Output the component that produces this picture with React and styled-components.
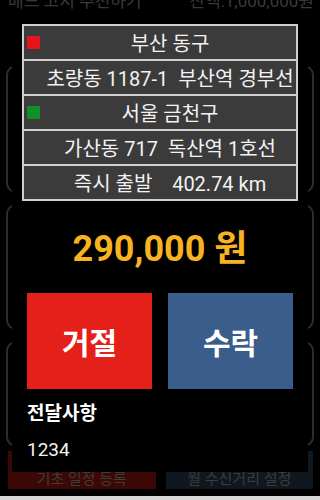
import React from "react";
import styled, { createGlobalStyle } from "styled-components";

const GlobalStyle = createGlobalStyle`
    html, body {
        margin: 0;
        padding: 0;
        background-color: #000;
    }
    body {
        font-family: Roboto, "Noto Sans CJK KR", sans-serif;
    }
`;

const Screen = styled.div`
    position: relative;
    width: 320px;
    height: 500px;
    overflow: hidden;
    background-color: #000;
`;

const Backdrop = styled.div`
    display: flex;
    flex-direction: column;
    height: 100%;
    color: #3a3a3a;
`;

const TopBar = styled.div`
    display: flex;
    justify-content: space-between;
    margin-top: -10px;
    padding: 0 6px 0 8px;
    height: 22px;
    font-size: 17px;
    line-height: 22px;
    white-space: nowrap;
`;

const Panels = styled.div`
    display: flex;
    flex-direction: column;
    gap: 11px;
    margin: 53px 6px 0;
`;

const Panel = styled.div`
    height: ${(p) => p.h}px;
    border: 2px solid #2e2e2e;
    border-radius: 10px;
    box-sizing: border-box;
`;

const BottomRow = styled.div`
    display: flex;
    gap: 10px;
    margin: 4px 7px 0 8px;
    height: 38px;
`;

const DimButton = styled.div`
    flex: 1;
    display: flex;
    align-items: center;
    justify-content: center;
    padding-top: 14px;
    box-sizing: border-box;
    background-color: ${(p) => p.bg};
    color: #3c3c3c;
    font-size: 15px;
`;

const NavStrip = styled.div`
    margin-top: auto;
    height: 4px;
    background-color: #d8d8d8;
`;

const Dialog = styled.div`
    position: absolute;
    left: 12px;
    top: 14px;
    width: 296px;
    height: 458px;
    box-sizing: border-box;
    padding: 10px 10px 0;
    background-color: #000;
    display: flex;
    flex-direction: column;
`;

const InfoTable = styled.div`
    display: flex;
    flex-direction: column;
    border-top: 2px solid #cfcfcf;
`;

const InfoRow = styled.div`
    position: relative;
    height: 33px;
    display: flex;
    align-items: center;
    justify-content: center;
    padding-left: 20px;
    background-color: #3b3b3b;
    border: 2px solid #cfcfcf;
    border-top: none;
    color: #f2f2f2;
    font-size: 20px;
    white-space: pre;
`;

const Marker = styled.span`
    position: absolute;
    left: 3px;
    top: 50%;
    width: 13px;
    height: 13px;
    margin-top: -7px;
    background-color: ${(p) => p.color};
`;

const Price = styled.div`
    margin-top: 26px;
    text-align: center;
    color: #f7b321;
    font-size: 36px;
    font-weight: 700;
    line-height: 44px;
`;

const Actions = styled.div`
    display: flex;
    gap: 16px;
    margin: 22px 5px 0;
`;

const ActionButton = styled.button`
    flex: 1;
    height: 96px;
    border: none;
    background-color: ${(p) => p.bg};
    color: #fff;
    font-family: inherit;
    font-size: 30px;
    font-weight: 700;
`;

const NoteTitle = styled.div`
    margin: 13px 5px 0;
    color: #fff;
    font-size: 19px;
    font-weight: 700;
    line-height: 24px;
`;

const NoteBody = styled.div`
    margin: 12px 5px 0;
    color: #f2f2f2;
    font-size: 19px;
    line-height: 24px;
`;

const App = () => {
    return (
        <Screen>
            <GlobalStyle />
            <Backdrop>
                <TopBar>
                    <span>배드  고지  추천하기</span>
                    <span>잔액:1,000,000원</span>
                </TopBar>
                <Panels>
                    <Panel h={128} />
                    <Panel h={126} />
                    <Panel h={106} />
                </Panels>
                <BottomRow>
                    <DimButton bg="#3c0805">기초 일정 등록</DimButton>
                    <DimButton bg="#0f1820">월 수신거리 설정</DimButton>
                </BottomRow>
                <NavStrip />
            </Backdrop>
            <Dialog>
                <InfoTable>
                    <InfoRow>
                        <Marker color="#e8141b" />
                        부산 동구
                    </InfoRow>
                    <InfoRow>초량동 1187-1  부산역 경부선</InfoRow>
                    <InfoRow>
                        <Marker color="#11902a" />
                        서울 금천구
                    </InfoRow>
                    <InfoRow>가산동 717  독산역 1호선</InfoRow>
                    <InfoRow>즉시 출발    402.74 km</InfoRow>
                </InfoTable>
                <Price>290,000 원</Price>
                <Actions>
                    <ActionButton bg="#e51f1a">거절</ActionButton>
                    <ActionButton bg="#3a5d8c">수락</ActionButton>
                </Actions>
                <NoteTitle>전달사항</NoteTitle>
                <NoteBody>1234</NoteBody>
            </Dialog>
        </Screen>
    );
};

export default App;
